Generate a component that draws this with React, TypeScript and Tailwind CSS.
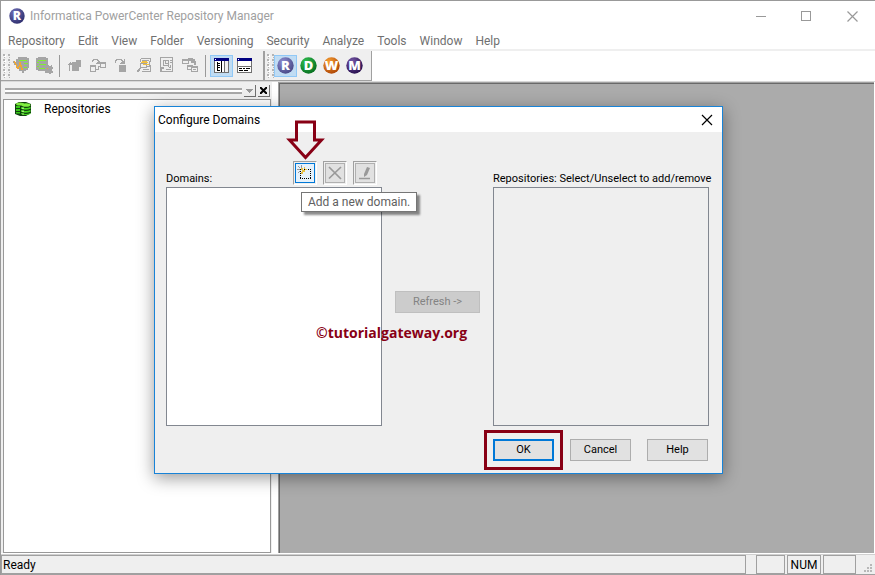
import type { ReactNode } from "react";
import clsx from "clsx";

const menus = ["Repository", "Edit", "View", "Folder", "Versioning", "Security", "Analyze", "Tools", "Window", "Help"];

function Pix({ children, size = 17 }: { children: ReactNode; size?: number }) {
  return (
    <svg width={size} height={size} viewBox={`0 0 ${size} ${size}`} shapeRendering="crispEdges" aria-hidden="true">
      {children}
    </svg>
  );
}

const ConnectIcon = () => (
  <Pix>
    <path fill="#a5a5a5" d="M5 0h9v1h2v10h-1v2h-2v1h-2v2H9v-2H6v-2H5v-1H3V8H1V6H0V4h2v1h1V2h2z" />
    <path fill="#80f030" d="M6 3h8v1H6zM11 6h4v1h-4zM11 10h3v1h-3z" />
    <path fill="#f0a830" d="M1 4h1v1h1v2h1v4H3V8H2V6H1zM6 5h2v3h1v3h1v2H8v-3H6v2H5v-3h1zM4 10h1v2H4z" />
  </Pix>
);

const DisconnectIcon = () => (
  <Pix>
    <path fill="#a5a5a5" d="M2 0h8v1h2v7h1v1h2V8h1v2h1v2h-1v2h1v2h-2v1h-2v-1H9v-2H2v-1H0V1h2z" />
    <path fill="#80f030" d="M2 3h8v1H2zM1 5h2v1H1zM3 7h7v1H3zM1 9h2v1H1zM3 11h6v1H3z" />
    <path fill="#f0a830" d="M11 11h1v1h-1z" />
  </Pix>
);

const CheckOutIcon = () => (
  <Pix>
    <path fill="#a5a5a5" d="M9 3h5v7h-2v4H5V5h4zM2 6h1V5h1v1h1v2H3v6H2zM1 7h1v1H1z" />
  </Pix>
);

const CompareIcon = () => (
  <Pix>
    <path fill="none" stroke="#a5a5a5" d="M.5 8.500h5v6h-5zM10.500 5.500h5v5h-5zM6 12.500h2.500v-3H10M2.500 5V3.500h1v-1h4v1h1v1h1V6" />
    <path fill="#a5a5a5" d="M6 6h4v1H6zM7 5h3v1H7zM8 4h2v1H8zM0 8h6v2H0zM10 5h6v2h-6z" />
  </Pix>
);

const MoveIcon = () => (
  <Pix>
    <path fill="none" stroke="#a5a5a5" d="M2.500 6V3.500h1v-1h5v1h1v2" />
    <path fill="#a5a5a5" d="M11 2h1v5H7V6h1V5h2V4h1zM6 8h7v7H6z" />
  </Pix>
);

const SearchIcon = () => (
  <Pix>
    <path fill="none" stroke="#a5a5a5" d="M4.500 1.500h10v3h-1v4h1v6H6M4.500 2v3M4.500 6.500h6v4h-6z" />
    <path fill="#a5a5a5" d="M3 11h2v1H3zM2 12h2v2H2zM1 13h2v2H1zM7 12h6v1H7zM6 3h7v1H6zM11 9h3v1h-3z" />
    <path fill="#f0c040" d="M6 4h5v1H6zM5 5h7v1H5zM7 7h6v1H7z" />
  </Pix>
);

const HistoryIcon = () => (
  <Pix>
    <path fill="none" stroke="#a5a5a5" d="M1.500 .5h12v14h-12zM4.500 3.500h5v5h-5zM8 8l3 3" />
    <path fill="#a5a5a5" d="M11 3h2v1h-2zM11 5h2v1h-2zM6 4h1v3H6zM7 6h2v1H7zM2 10h3v2H3v2H2zM7 12h5v1H7zM11 8h1v3h-1z" />
  </Pix>
);

const DependIcon = () => (
  <Pix>
    <path fill="none" stroke="#a5a5a5" d="M.5 2.500h6v4h-6zM5.500 8.500h5M9.500 9.500h6v5h-6zM5.500 8v4H9" />
    <path fill="#a5a5a5" d="M6 1h5v1h2v2h1v4h-2V6H9V4H6zM0 2h6v2H0zM5 8h5v2H5zM9 9h7v2H9zM11 12h3v1h-3z" />
  </Pix>
);

const TreeViewIcon = () => (
  <Pix>
    <path fill="#707070" d="M1 1h15v15H1z" />
    <path fill="#fff" d="M2 4h6v11H2zM9 4h2v11H9z" />
    <path fill="#efefef" d="M12 4h3v11h-3z" />
    <path fill="#000080" d="M1 1h15v3H1z" />
    <path fill="#fff" d="M2 2h1v1H2z" />
    <path fill="#000" d="M4 5h1v9H4zM5 6h2v1H5zM5 8h2v1H5zM5 10h2v1H5zM5 13h2v1H5zM8 4h1v11H8z" />
  </Pix>
);

const OutputViewIcon = () => (
  <Pix>
    <path fill="#707070" d="M1 1h15v15H1z" />
    <path fill="#fff" d="M2 4h13v5H2zM2 10h13v5H2z" />
    <path fill="#000080" d="M1 1h15v3H1z" />
    <path fill="#fff" d="M2 2h1v1H2z" />
    <path fill="#000" d="M3 11h3v1H3zM7 11h2v1H7zM10 11h4v1h-4zM3 13h4v1H3zM8 13h4v1H8z" />
  </Pix>
);

function Orb({ letter, inner, outer, size = 17 }: { letter: string; inner: string; outer: string; size?: number }) {
  const id = `orb-${letter}-${size}`;
  return (
    <svg width={size} height={size} viewBox="0 0 17 17" aria-hidden="true">
      <defs>
        <radialGradient id={id} cx="35%" cy="28%" r="75%">
          <stop offset="0" stopColor={inner} />
          <stop offset="1" stopColor={outer} />
        </radialGradient>
      </defs>
      <circle cx="8.5" cy="8.5" r="8.2" fill={`url(#${id})`} />
      <text x="8.5" y="13" textAnchor="middle" fontSize="13" fontWeight="800" fill="#fff" fontFamily="Open Sans, sans-serif">
        {letter}
      </text>
    </svg>
  );
}

const DatabaseIcon = () => (
  <svg width="18" height="16" viewBox="0 0 18 16" aria-hidden="true">
    <path fill="#104010" d="M1 3l4-2h7l5 2v9l-5 3H6l-5-2z" />
    <path fill="#38c818" d="M2 5h4v2H2zM2 8h4v2H2zM2 11h4v1.500H2z" />
    <ellipse cx="6" cy="3" rx="4" ry="1.500" fill="#80e840" />
    <ellipse cx="12" cy="4" rx="4.500" ry="1.800" fill="#80f040" />
    <path fill="#48d820" d="M7 6q5 2 9.500 0v1.800q-5 2-9.500 0zM7 9q5 2 9.500 0v1.800q-5 2-9.500 0zM7 12q5 2 9.500 0v1q-5 2-9.500 0z" />
    <path fill="#a0f870" d="M8 6.500h2v1.500H8zM8 9.500h2V11H8zM8 12.500h2v1H8z" />
  </svg>
);

function ToolButton({ label, active, children }: { label: string; active?: boolean; children: ReactNode }) {
  return (
    <button
      type="button"
      aria-label={label}
      aria-pressed={active}
      className={clsx(
        "flex h-[22px] w-[23px] shrink-0 items-center justify-center border",
        active ? "border-[#90c8f6] bg-[#c0dcf3]" : "border-transparent"
      )}
    >
      {children}
    </button>
  );
}

const Grip = () => (
  <svg width="9" height="28" viewBox="0 0 9 28" className="shrink-0" shapeRendering="crispEdges" aria-hidden="true">
    {[2, 7, 12, 17, 22].map((y) => (
      <g key={y}>
        <path fill="#b4b4b4" d={`M2 ${y}h2v2h-2zM7 ${y}h2v2h-2zM3 ${y + 3}h1v1h-1zM8 ${y + 3}h1v1h-1z`} />
        <path fill="#fff" d={`M4 ${y + 1}h1v2h-2v-1h1z`} />
      </g>
    ))}
  </svg>
);

const Divider = () => <span className="mr-1 ml-[3px] h-[22px] w-px shrink-0 bg-[#999]" />;

function DomainButton({ label, active, children }: { label: string; active?: boolean; children: ReactNode }) {
  return (
    <div className="border border-t-[#a0a0a0] border-r-white border-b-white border-l-[#a0a0a0] p-px">
      <button
        type="button"
        aria-label={label}
        disabled={!active}
        className={clsx(
          "flex h-5 w-5 items-center justify-center border",
          active ? "border-[#0078d7] bg-[#e5f1fb]" : "border-[#b0b0b0] bg-[#e1e1e1]"
        )}
      >
        {children}
      </button>
    </div>
  );
}

function DialogButton({ children, primary }: { children: ReactNode; primary?: boolean }) {
  return (
    <button
      type="button"
      className={clsx(
        "flex h-[22px] w-[61px] items-center justify-center bg-[#e1e1e1] text-[11px] leading-4",
        primary ? "border-2 border-[#0078d7]" : "border border-[#adadad]"
      )}
    >
      {children}
    </button>
  );
}

function TitleBar() {
  return (
    <header className="flex h-[30px] shrink-0 items-center pl-2">
      <Orb letter="R" inner="#7070b8" outer="#303070" size={16} />
      <h1 className="ml-[5px] flex-1 text-[12px] leading-4 text-[#a0a0a0]">Informatica PowerCenter Repository Manager</h1>
      <button type="button" aria-label="Minimize" className="flex w-[45px] justify-center">
        <Pix size={11}><path fill="#999" d="M0 5h10v1H0z" /></Pix>
      </button>
      <button type="button" aria-label="Maximize" className="flex w-[45px] justify-center">
        <Pix size={11}><path fill="none" stroke="#999" d="M.5 .5h9v9h-9z" /></Pix>
      </button>
      <button type="button" aria-label="Close" className="flex w-[46px] justify-center">
        <svg width="11" height="11" aria-hidden="true"><path stroke="#999" strokeWidth="1.200" d="M.5 .5l10 10M10.500 .5l-10 10" /></svg>
      </button>
    </header>
  );
}

function Toolbars() {
  return (
    <div className="flex h-[31px] shrink-0 border-b border-[#d8d8d8]">
      <div className="flex w-[264px] items-center border-r-2 border-b border-[#a0a0a0] bg-[#efefef]">
        <Grip />
        <ToolButton label="Connect"><ConnectIcon /></ToolButton>
        <ToolButton label="Disconnect"><DisconnectIcon /></ToolButton>
        <Divider />
        <ToolButton label="Check out"><CheckOutIcon /></ToolButton>
        <ToolButton label="Compare"><CompareIcon /></ToolButton>
        <ToolButton label="Move"><MoveIcon /></ToolButton>
        <ToolButton label="Search"><SearchIcon /></ToolButton>
        <ToolButton label="History"><HistoryIcon /></ToolButton>
        <ToolButton label="Dependencies"><DependIcon /></ToolButton>
        <Divider />
        <ToolButton label="Navigator" active><TreeViewIcon /></ToolButton>
        <ToolButton label="Output"><OutputViewIcon /></ToolButton>
      </div>
      <div className="flex w-[107px] items-center border-r border-b border-[#a0a0a0] bg-[#efefef]">
        <Grip />
        <ToolButton label="Repository Manager" active><Orb letter="R" inner="#8c8cd0" outer="#4a4a88" /></ToolButton>
        <ToolButton label="Designer"><Orb letter="D" inner="#30c050" outer="#087020" /></ToolButton>
        <ToolButton label="Workflow Manager"><Orb letter="W" inner="#f8a030" outer="#b04808" /></ToolButton>
        <ToolButton label="Workflow Monitor"><Orb letter="M" inner="#7858a8" outer="#281050" /></ToolButton>
      </div>
    </div>
  );
}

function Navigator() {
  return (
    <aside className="flex w-[271px] shrink-0 flex-col bg-[#efefef] pr-px pl-[2px]">
      <div className="flex h-[17px] shrink-0 items-center gap-[2px] pr-px pl-[2px]">
        <div className="h-[6px] flex-1 border-y-2 border-[#a8a8a8] bg-white" />
        <button type="button" aria-label="Panel menu" className="flex h-3 w-3 items-center justify-center border-r border-b border-[#707070] bg-[#efefef]">
          <Pix size={7}><path fill="#999" d="M0 2h7v1H6v1H5v1H4v1H3V5H2V4H1V3H0z" /></Pix>
        </button>
        <button type="button" aria-label="Close panel" className="flex h-3 w-3 items-center justify-center border-r border-b border-[#707070] bg-[#efefef]">
          <svg width="7" height="7" aria-hidden="true"><path stroke="#000" strokeWidth="2" d="M0 0l7 7M7 0L0 7" /></svg>
        </button>
      </div>
      <div className="flex-1 border border-[#999] bg-white pt-px">
        <ul>
          <li className="flex items-center gap-3 pl-[10px] text-[12px] leading-4">
            <DatabaseIcon />
            Repositories
          </li>
        </ul>
      </div>
    </aside>
  );
}

function StatusBar() {
  return (
    <footer className="flex h-5 shrink-0 items-stretch border-b border-[#a0a0a0] bg-[#efefef] text-[12px] leading-[18px]">
      <div className="mr-[10px] flex-1 border border-[#a0a0a0] pl-px">Ready</div>
      <div className="mr-[2px] w-[29px] border border-[#a0a0a0]" />
      <div className="mr-[2px] w-[34px] border border-[#a0a0a0] text-center">NUM</div>
      <div className="w-[33px] border border-[#a0a0a0]" />
      <div className="flex w-[19px] items-end justify-end pr-[2px]">
        <Pix size={10}><path fill="#b8b8b8" d="M7 0h2v2H7zM4 3h2v2H4zM7 3h2v2H7zM1 6h2v2H1zM4 6h2v2H4zM7 6h2v2H7z" /></Pix>
      </div>
    </footer>
  );
}

function ConfigureDomains() {
  return (
    <section
      role="dialog"
      aria-labelledby="dialog-title"
      className="absolute top-[105px] left-[153px] w-[569px] border border-[#1883d7] bg-[#efefef] shadow-[0_4px_16px_rgba(0,0,0,0.4)]"
    >
      <div className="flex h-[25px] items-center justify-between bg-white pr-[9px] pl-[3px]">
        <h2 id="dialog-title" className="text-[12px] leading-4">Configure Domains</h2>
        <button type="button" aria-label="Close dialog">
          <svg width="12" height="12" aria-hidden="true"><path stroke="#000" strokeWidth="1.200" d="M1 1l10 10M11 1L1 11" /></svg>
        </button>
      </div>

      <div className="flex pt-7 pr-[13px] pl-[11px] text-[11px] leading-4">
        <div className="relative w-[216px]">
          <div className="flex h-[27px] items-start justify-between pt-px">
            <label htmlFor="domains" className="pt-[10px]">Domains:</label>
            <div className="mr-[5px] flex gap-[6px]">
              <DomainButton label="Add a new domain" active>
                <Pix size={16}>
                  <path fill="none" stroke="#000" strokeDasharray="1 1" d="M3 4.500h11M13.500 4v10M3 13.500h11M3.500 6v8" />
                  <path fill="#e8c040" d="M4 3h2v2h2v2H6v2H4V7h1V5H4zM7 2h1v2H7zM8 4h2v1H8z" />
                  <path fill="#999" d="M1 1h1v1h1v1H2V2H1zM4 0h1v3H4zM0 4h3v1H0zM1 7h1V6h1v1H2v1H1z" />
                </Pix>
              </DomainButton>
              <DomainButton label="Delete domain">
                <svg width="14" height="14" aria-hidden="true"><path fill="none" stroke="#999" strokeWidth="1.700" d="M1 1l12 12M13 1L1 12.500" /></svg>
              </DomainButton>
              <DomainButton label="Edit domain">
                <svg width="14" height="14" aria-hidden="true">
                  <path fill="#999" d="M9 1l3 1-3 7-3 2V8z" />
                  <path stroke="#999" strokeWidth="1.500" d="M1 12.500h11" />
                </svg>
              </DomainButton>
            </div>
          </div>
          <select id="domains" multiple className="block h-[239px] w-full appearance-none border border-[#828790] bg-white" />
          <div role="tooltip" className="absolute top-[32px] left-[135px] border border-[#767676] bg-white px-[6px] py-px text-[12px] leading-4 whitespace-nowrap text-[#606060] shadow-[3px_3px_2px_rgba(0,0,0,0.45)]">
            Add a new domain.
          </div>
          <svg className="absolute -top-[41px] left-[120px]" width="40" height="42" viewBox="0 0 40 42" aria-hidden="true">
            <path fill="none" stroke="#880015" strokeWidth="3" d="M10.500 3h18v18h7L19.500 38.500 3.500 21h7z" />
          </svg>
          <p className="absolute top-[163px] left-[150px] font-['Open_Sans',sans-serif] text-[14px] leading-5 font-bold whitespace-nowrap text-[#880015]">©tutorialgateway.org</p>
        </div>

        <div className="flex flex-1 items-start justify-center">
          <button type="button" disabled className="mt-[131px] h-[22px] w-[85px] border border-[#bfbfbf] bg-[#cccccc] text-[#838383]">
            Refresh -&gt;
          </button>
        </div>

        <div className="w-[216px]">
          <div className="h-[27px] pt-[11px]">
            <label htmlFor="repositories" className="whitespace-nowrap">Repositories: Select/Unselect to add/remove</label>
          </div>
          <select id="repositories" multiple className="block h-[239px] w-full appearance-none border border-[#828790] bg-[#efefef]" />
        </div>
      </div>

      <div className="flex items-center justify-end pt-1 pr-[14px] pb-[3px]">
        <div className="mr-[7px] border-3 border-[#880015] p-[6px]">
          <DialogButton primary>OK</DialogButton>
        </div>
        <div className="flex gap-4">
          <DialogButton>Cancel</DialogButton>
          <DialogButton>Help</DialogButton>
        </div>
      </div>
    </section>
  );
}

export default function App() {
  return (
    <div className="relative flex h-screen min-h-[480px] flex-col overflow-hidden border-t border-l border-[#999] bg-white font-[Roboto,sans-serif] text-black">
      <TitleBar />
      <nav className="flex h-5 shrink-0 items-center gap-[13px] border-b-2 border-[#efefef] pt-[2px] pl-[7px] text-[12px] leading-4 text-[#707070]">
        {menus.map((name) => (
          <button key={name} type="button">{name}</button>
        ))}
      </nav>
      <Toolbars />
      <main className="flex min-h-0 flex-1">
        <Navigator />
        <div className="ml-[6px] mr-px flex flex-1 border-t border-l border-[#a0a0a0]">
          <div className="flex-1 border-t border-l border-[#696969] bg-[#ababab]" />
        </div>
      </main>
      <div className="h-[2px] shrink-0 border-t border-white bg-[#d0d0d0]" />
      <StatusBar />
      <ConfigureDomains />
    </div>
  );
}
